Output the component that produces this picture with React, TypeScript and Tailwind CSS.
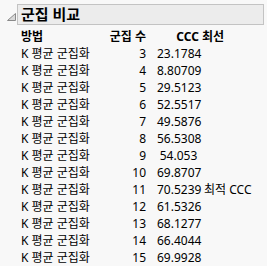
const rows: [number, string, string][] = [
  [3, "23.1784", ""],
  [4, "8.80709", ""],
  [5, "29.5123", ""],
  [6, "52.5517", ""],
  [7, "49.5876", ""],
  [8, "56.5308", ""],
  [9, "54.053", ""],
  [10, "69.8707", ""],
  [11, "70.5239", "최적 CCC"],
  [12, "61.5326", ""],
  [13, "68.1277", ""],
  [14, "66.4044", ""],
  [15, "69.9928", ""],
];

export default function App() {
  return (
    <div
      className="w-[267px] h-[266px] overflow-hidden bg-[#f8f8f8] text-black"
      style={{ fontFamily: '"Noto Sans", "Noto Sans CJK KR", sans-serif' }}
    >
      <div className="flex items-center pt-[4px] pl-[7px] pr-[3px]">
        <svg width="9" height="8" viewBox="0 0 9 8" className="mr-[1px] mt-[5px]">
          <polygon points="0.5,7.5 8.5,0.5 8.5,7.5" fill="#d8d8d8" stroke="#8a8a8a" strokeWidth="1" />
        </svg>
        <div className="flex-1 h-[21px] border border-[#c3c3c3] bg-[#ececec] pl-[3px] flex items-center">
          <span className="text-[15px] font-bold leading-none">군집 비교</span>
        </div>
      </div>

      <div className="grid grid-cols-[85px_40px_54px_1fr] pl-[21px] pt-[3px] text-[12px] leading-[17px]">
        <div className="font-bold">방법</div>
        <div className="font-bold text-right whitespace-nowrap">군집 수</div>
        <div className="font-bold text-right pr-[1px]">CCC</div>
        <div className="font-bold pl-[2px]">최선</div>
        {rows.map(([n, ccc, best]) => (
          <div key={n} className="contents">
            <div className="whitespace-nowrap">K 평균 군집화</div>
            <div className="text-right">{n}</div>
            <div className="pl-[11px] text-center">{ccc}</div>
            <div className="pl-[4px] whitespace-nowrap">{best}</div>
          </div>
        ))}
      </div>
    </div>
  );
}
